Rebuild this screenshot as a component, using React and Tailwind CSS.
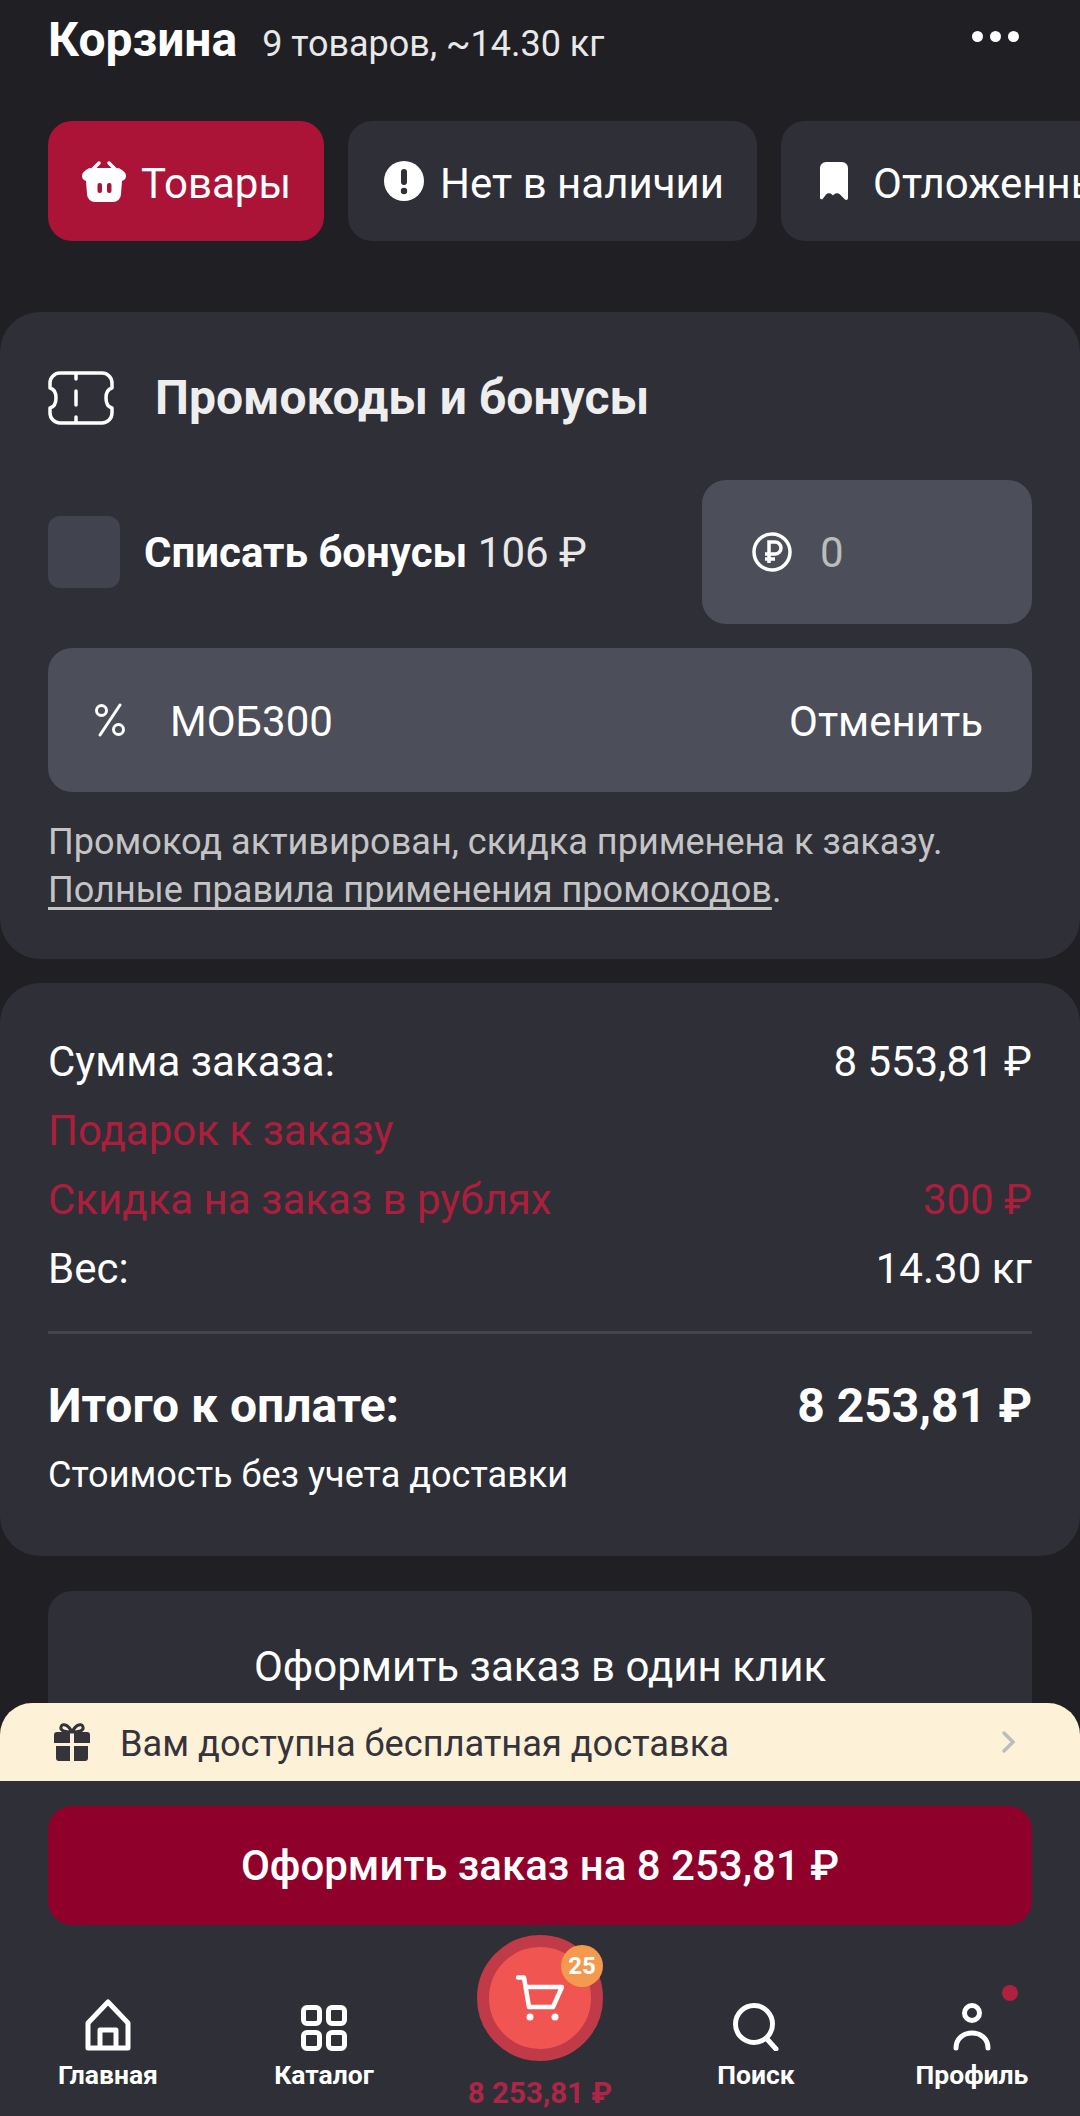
import React from "react";

const BasketIcon = () => (
  <svg width="44" height="42" viewBox="0 0 44 42" fill="none">
    <path d="M10 10 17 3M34 10l-7-7" stroke="#fff" strokeWidth="3.500" strokeLinecap="round" />
    <path d="M9 8h26c3 0 5 2 6 3 2 1 3 3 3 5s-1 4-4 5l-1 13a8 8 0 0 1-8 8H13a8 8 0 0 1-8-8L4 21c-3-1-4-3-4-5s1-4 3-5c1-1 3-3 6-3z" fill="#fff" />
    <rect x="15.500" y="23" width="4.500" height="10" rx="2" fill="#ab1437" />
    <rect x="25" y="23" width="4.500" height="10" rx="2" fill="#ab1437" />
  </svg>
);

const AlertIcon = () => (
  <svg width="40" height="40" viewBox="0 0 40 40">
    <circle cx="20" cy="20" r="20" fill="#fff" />
    <rect x="17" y="8" width="6" height="16" rx="3" fill="#2e2f37" />
    <circle cx="20" cy="30" r="3.200" fill="#2e2f37" />
  </svg>
);

const BookmarkIcon = () => (
  <svg width="40" height="38" viewBox="-3 0 40 38">
    <path d="M6 0h16a6 6 0 0 1 6 6v30c0 2-2 2.500-3 1.500l-5-5a4 4 0 0 0-6 0l-1 1-1-1a4 4 0 0 0-6 0l-3 4c-1 1.500-3 1-3-1V6a6 6 0 0 1 6-6z" fill="#fff" />
  </svg>
);

const TicketIcon = () => (
  <svg width="66" height="54" viewBox="0 0 66 54" fill="none" stroke="#fff" strokeWidth="3.500" strokeLinejoin="round">
    <path d="M12 2h42a10 10 0 0 1 10 10v5c-4 1-6 5-6 10s2 9 6 10v5a10 10 0 0 1-10 10H12A10 10 0 0 1 2 42v-5c4-1 6-5 6-10s-2-9-6-10v-5A10 10 0 0 1 12 2z" />
    <path d="M28 3v5M28 20v14M28 46v5" strokeLinecap="round" />
  </svg>
);

const RubleCircle = () => (
  <svg width="40" height="40" viewBox="0 0 40 40" fill="none" stroke="#fff">
    <circle cx="20" cy="20" r="18" strokeWidth="3.500" />
    <path d="M17 31V10h6a5.500 5.500 0 0 1 0 12H13M13 27h10" strokeWidth="3.500" />
  </svg>
);

const PercentIcon = () => (
  <svg width="32" height="34" viewBox="0 0 32 34" fill="none" stroke="#fff" strokeWidth="3">
    <circle cx="7.500" cy="7.500" r="5" />
    <circle cx="24.500" cy="26.500" r="5" />
    <path d="M26 2 6 32" strokeLinecap="round" />
  </svg>
);

const GiftIcon = () => (
  <svg width="36" height="38" viewBox="0 0 36 38" fill="#34343a">
    <path d="M18 9C14 1 8 0 7 4s4 5 11 5zM18 9c4-8 10-9 11-5s-4 5-11 5z" fill="none" stroke="#34343a" strokeWidth="3" />
    <path d="M3 9h13v11H0v-8a3 3 0 0 1 3-3zM20 9h13a3 3 0 0 1 3 3v8H20zM2 23h14v15H5a3 3 0 0 1-3-3zM20 23h14v12a3 3 0 0 1-3 3H20z" />
  </svg>
);

const GridIcon = () => (
  <svg width="46" height="46" viewBox="0 0 46 46" fill="none" stroke="#fff" strokeWidth="5">
    <rect x="2.500" y="2.500" width="16" height="16" rx="3.500" />
    <rect x="27.500" y="2.500" width="16" height="16" rx="3.500" />
    <rect x="2.500" y="27.500" width="16" height="16" rx="3.500" />
    <rect x="27.500" y="27.500" width="16" height="16" rx="3.500" />
  </svg>
);

const HouseIcon = () => (
  <svg width="46" height="52" viewBox="0 0 46 52" fill="none" stroke="#fff" strokeWidth="5" strokeLinejoin="round">
    <path d="M23 3 3 24v25h40V24z" />
    <path d="M15 49V31h16v18" />
  </svg>
);

const SearchIcon = () => (
  <svg width="46" height="48" viewBox="0 0 46 48" fill="none" stroke="#fff" strokeWidth="5" strokeLinecap="round">
    <circle cx="21" cy="21" r="18.500" />
    <path d="m34 36 9 10" />
  </svg>
);

const UserIcon = () => (
  <svg width="38" height="48" viewBox="0 0 38 48" fill="none" stroke="#fff" strokeWidth="5" strokeLinecap="round">
    <circle cx="19" cy="10" r="7.500" />
    <path d="M3 45c0-9 7-15 16-15s16 6 16 15" />
  </svg>
);

const CartIcon = () => (
  <svg width="48" height="46" viewBox="0 0 48 46" fill="none" stroke="#fff" strokeWidth="4.500" strokeLinecap="round" strokeLinejoin="round">
    <path d="M2 2.500h6L13 32h24l9-20H10" />
    <circle cx="14" cy="42" r="3.500" fill="#fff" stroke="none" />
    <circle cx="39" cy="42" r="3.500" fill="#fff" stroke="none" />
  </svg>
);

const tabs = [
  { label: "Товары", icon: <BasketIcon />, active: true },
  { label: "Нет в наличии", icon: <AlertIcon /> },
  { label: "Отложенные", icon: <BookmarkIcon /> },
];

const NavItem = ({ icon, label }) => (
  <div className="flex flex-col items-center">
    <div className="flex h-[54px] items-end">{icon}</div>
    <span className="mt-[6px] text-[26.500px] leading-[36px] font-bold text-white">{label}</span>
  </div>
);

export default function App() {
  return (
    <div className="relative h-[2116px] w-[1080px] overflow-hidden bg-[#1f1f24] font-['Roboto',sans-serif] text-white">
      <div className="flex items-center justify-between pl-[48px] pr-[61px] pt-[12px]">
        <div className="flex items-baseline gap-[25px]">
          <h1 className="text-[48px] leading-[56px] font-bold">Корзина</h1>
          <span className="text-[36px] leading-[40px] text-[#e8e8e8]">9 товаров, ~14.30 кг</span>
        </div>
        <div className="mb-[8px] flex gap-[7px]">
          <span className="size-[11px] rounded-full bg-white" />
          <span className="size-[11px] rounded-full bg-white" />
          <span className="size-[11px] rounded-full bg-white" />
        </div>
      </div>

      <div className="mt-[53px] flex gap-[24px] overflow-hidden pl-[48px]">
        {tabs.map((t) => (
          <div
            key={t.label}
            className={`flex h-[120px] shrink-0 items-center rounded-[24px] pr-[33px] text-[42px] whitespace-nowrap ${
              t.active ? "gap-[15px] bg-[#ab1437] pl-[34px]" : "gap-[16px] bg-[#2e2f37] pl-[36px]"
            }`}
          >
            {t.icon}
            <span className="mt-[4px]">{t.label}</span>
          </div>
        ))}
      </div>

      <section className="mt-[71px] rounded-[40px] bg-[#2e2f37] px-[48px] pt-[58px] pb-[45px]">
        <div className="flex items-center gap-[41px]">
          <TicketIcon />
          <h2 className="text-[48px] leading-[56px] font-bold text-[#eeeeee]">Промокоды и бонусы</h2>
        </div>

        <div className="mt-[54px] flex items-center justify-between">
          <div className="flex items-center gap-[24px]">
            <div className="size-[72px] rounded-[12px] bg-[#41434e]" />
            <p className="text-[42px]">
              <span className="font-bold">Списать бонусы</span>{" "}
              <span className="text-[#e8e8e8]">106 ₽</span>
            </p>
          </div>
          <div className="flex h-[144px] w-[330px] items-center gap-[28px] rounded-[24px] bg-[#4c4e5a] pl-[50px]">
            <RubleCircle />
            <span className="text-[42px] text-[#bcbcbc]">0</span>
          </div>
        </div>

        <div className="mt-[24px] flex h-[144px] items-center justify-between rounded-[24px] bg-[#4c4e5a] pl-[46px] pr-[49px] text-[42px]">
          <div className="flex items-center gap-[44px]">
            <PercentIcon />
            <span className="mt-[2px]">МОБ300</span>
          </div>
          <span className="mt-[2px]">Отменить</span>
        </div>

        <p className="mt-[26px] text-[36.100px] leading-[48px] text-[#c4c4c4]">
          Промокод активирован, скидка применена к заказу.
          <br />
          <span className="underline underline-offset-[5px] [text-decoration-skip-ink:none]">Полные правила применения промокодов</span>.
        </p>
      </section>

      <section className="mt-[24px] rounded-[40px] bg-[#2e2f37] px-[48px] pt-[56px] pb-[59px] text-[42px]">
        <div className="flex flex-col gap-[24px] leading-[45px]">
          <div className="flex justify-between">
            <span>Сумма заказа:</span>
            <span>8 553,81 ₽</span>
          </div>
          <div className="text-[#ab1f3c]">Подарок к заказу</div>
          <div className="flex justify-between text-[#ab1f3c]">
            <span>Скидка на заказ в рублях</span>
            <span>300 ₽</span>
          </div>
          <div className="flex justify-between">
            <span>Вес:</span>
            <span>14.30 кг</span>
          </div>
        </div>
        <div className="mt-[40px] h-[3px] bg-[#43444e]" />
        <div className="mt-[44px] flex justify-between text-[48px] leading-[56px] font-bold">
          <span>Итого к оплате:</span>
          <span>8 253,81 ₽</span>
        </div>
        <p className="mt-[19px] text-[36.100px] leading-[44px]">Стоимость без учета доставки</p>
      </section>

      <div className="mx-[48px] mt-[35px] flex h-[150px] justify-center rounded-[24px] bg-[#2e2f37] pt-[52px] text-[42px]">
        <span className="leading-[48px]">Оформить заказ в один клик</span>
      </div>

      {/* fixed bottom area, sits over the scrolled content */}
      <div className="absolute inset-x-0 bottom-0">
        <div className="flex h-[78px] items-center rounded-t-[32px] bg-[#fdf1d8] pl-[54px] pr-[63px] text-[36.200px] text-[#34343a]">
          <GiftIcon />
          <span className="ml-[30px] mt-[4px] flex-1">Вам доступна бесплатная доставка</span>
          <svg width="16" height="24" viewBox="0 0 16 24" fill="none" stroke="#bcbcbc" strokeWidth="3.500" strokeLinecap="round">
            <path d="m3 3 9 9-9 9" />
          </svg>
        </div>
        <div className="h-[335px] bg-[#2e2f37] px-[48px] pt-[25px]">
          <div className="flex h-[119px] items-center justify-center rounded-[24px] bg-[#8f002b] text-[42px] font-medium">
            Оформить заказ на 8 253,81 ₽
          </div>
          <div className="-mx-[48px] mt-[10px] grid grid-cols-5 items-start">
            <div className="pt-[62px]"><NavItem icon={<HouseIcon />} label="Главная" /></div>
            <div className="pt-[62px]"><NavItem icon={<GridIcon />} label="Каталог" /></div>
            <div className="flex flex-col items-center whitespace-nowrap">
              <div className="relative flex size-[126px] items-center justify-center rounded-full border-[12px] border-[#c03a48] bg-[#f05552]">
                <CartIcon />
                <span className="absolute right-[-12px] top-[-2px] flex size-[42px] items-center justify-center rounded-full bg-[#f39a4f] text-[24px] font-bold">25</span>
              </div>
              <span className="mt-[14px] text-[29.500px] leading-[36px] font-bold text-[#ae2647]">8 253,81 ₽</span>
            </div>
            <div className="pt-[62px]"><NavItem icon={<SearchIcon />} label="Поиск" /></div>
            <div className="relative pt-[62px]">
              <NavItem icon={<UserIcon />} label="Профиль" />
              <span className="absolute right-[62px] top-[50px] size-[16px] rounded-full bg-[#b0203f]" />
            </div>
          </div>
        </div>
      </div>
    </div>
  );
}
